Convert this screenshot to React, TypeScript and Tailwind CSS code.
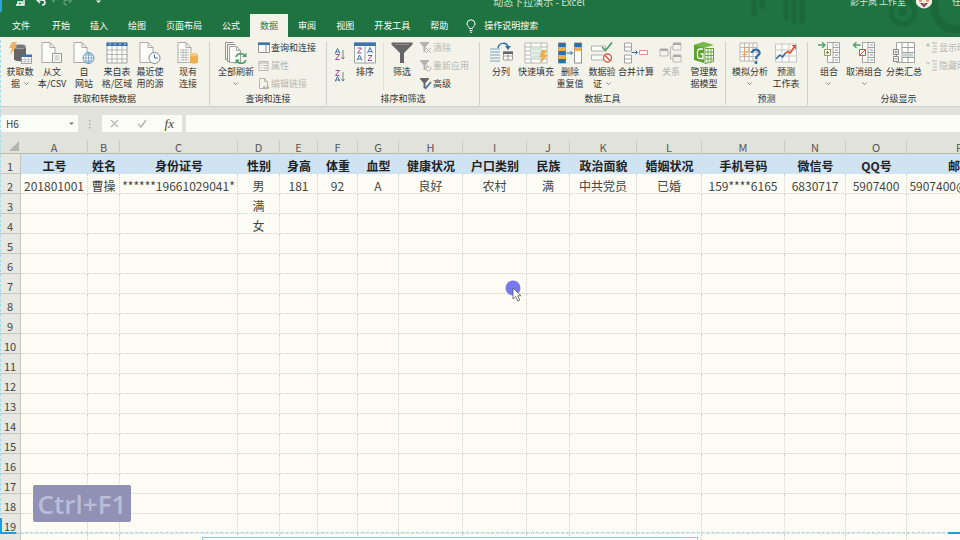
import type { ReactNode } from "react";
import { clsx } from "clsx";

const tabs = ["开始", "插入", "绘图", "页面布局", "公式", "数据", "审阅", "视图", "开发工具", "帮助"];

const columns = [
  { letter: "A", width: 67, title: "工号", value: "201801001" },
  { letter: "B", width: 32, title: "姓名", value: "曹操" },
  { letter: "C", width: 118, title: "身份证号", value: "******19661029041*" },
  { letter: "D", width: 42, title: "性别", value: "男" },
  { letter: "E", width: 38, title: "身高", value: "181" },
  { letter: "F", width: 40, title: "体重", value: "92" },
  { letter: "G", width: 41, title: "血型", value: "A" },
  { letter: "H", width: 64, title: "健康状况", value: "良好" },
  { letter: "I", width: 64, title: "户口类别", value: "农村" },
  { letter: "J", width: 43, title: "民族", value: "满" },
  { letter: "K", width: 67, title: "政治面貌", value: "中共党员" },
  { letter: "L", width: 65, title: "婚姻状况", value: "已婚" },
  { letter: "M", width: 83, title: "手机号码", value: "159****6165" },
  { letter: "N", width: 61, title: "微信号", value: "6830717" },
  { letter: "O", width: 61, title: "QQ号", value: "5907400" },
  { letter: "P", width: 106, title: "邮箱", value: "5907400@qq.com" },
];

const ROW_HEADER_WIDTH = 21;
const tableWidth = columns.reduce((sum, c) => sum + c.width, ROW_HEADER_WIDTH);
const bodyRows = Array.from({ length: 18 }, (_, i) => i + 3);
const extraCells: Record<string, string> = { D3: "满", D4: "女" };

function Icon({ children, small = false }: { children: ReactNode; small?: boolean }) {
  return small ? (
    <svg width="12" height="12" viewBox="0 0 12 12" fill="none" aria-hidden="true" className="shrink-0">
      {children}
    </svg>
  ) : (
    <svg width="24" height="22" viewBox="0 0 24 22" fill="none" aria-hidden="true" className="shrink-0">
      {children}
    </svg>
  );
}

function Page() {
  return <path d="M2 .5h8l5 5v15H2zM10 .5v5h5" fill="#fcfcf8" stroke="#a2a2a2" strokeWidth=".9" />;
}

function GetDataIcon() {
  return (
    <Icon>
      <path d="M6 5v12c0 3 12 3 12 0V5" fill="#666" />
      <ellipse cx="12" cy="4.5" rx="6" ry="2.3" fill="#777" stroke="#ddd" strokeWidth=".5" />
      <path d="M4 0h5L6.500 4H9L2 13l2-7H1z" fill="#f0b263" />
      <path d="M13.500 13.500h10v8h-10z" fill="#fff" stroke="#8b8b8b" strokeWidth=".8" />
      <path d="M13 12.500h11V15H13z" fill="#3e74ae" />
      <path d="M13.500 17.500h10M13.500 19.500h10M17 15v6.500M20.500 15v6.500" stroke="#9b9b9b" strokeWidth=".5" />
    </Icon>
  );
}

function TextFileIcon() {
  return (
    <Icon>
      <Page />
      <path d="M12.500 11.500h9v9h-9z" fill="#fcfcf8" stroke="#999" />
      <path d="M14.500 14h5M14.500 16h5M14.500 18h5" stroke="#a5a5a5" strokeWidth=".8" />
    </Icon>
  );
}

function WebIcon() {
  return (
    <Icon>
      <Page />
      <circle cx="16.500" cy="16" r="5.500" fill="#fafcfd" stroke="#5f94bd" />
      <path
        d="M11 16h11M16.500 10.500v11M12.500 13h8M12.500 19h8M16.500 10.500c-4 3-4 8 0 11M16.500 10.500c4 3 4 8 0 11"
        stroke="#5f94bd"
        strokeWidth=".7"
      />
    </Icon>
  );
}

function TableIcon() {
  return (
    <Icon>
      <path d="M2 1h20v20H2z" fill="#fcfcf8" stroke="#999" strokeWidth=".9" />
      <path d="M1.500.500h21V4h-21z" fill="#3e74ae" />
      <path d="M4 2h2M9 2h2M14 2h2M19 2h2" stroke="#b8d2ea" />
      <path d="M2 8h20M2 12.500h20M2 17h20M7 4v17M12 4v17M17 4v17" stroke="#a5a5a5" strokeWidth=".8" />
    </Icon>
  );
}

function RecentIcon() {
  return (
    <Icon>
      <Page />
      <circle cx="16.500" cy="16" r="5.500" fill="#fcfcf8" stroke="#7d8b98" />
      <path d="M16.500 12.500V16h3.500" stroke="#3e74ae" />
    </Icon>
  );
}

function ConnectionsIcon() {
  return (
    <Icon>
      <Page />
      <path d="M4 8h9M4 10.500h9M4 13h9M4 15.500h9M4 18h9M7 7v12M10 7v12" stroke="#aaa" strokeWidth=".7" />
      <path d="M14 12.500v7.500c0 2 8 2 8 0v-7.500" fill="#eeb04d" />
      <ellipse cx="18" cy="12.500" rx="4" ry="1.700" fill="#f5c983" />
    </Icon>
  );
}

function RefreshIcon() {
  return (
    <Icon>
      <path d="M1.500.500h8M1.500.500v17h2M3.500 2.500h8M3.500 2.500v17h2" stroke="#888" strokeWidth=".9" />
      <path d="M5.500 4.500h7l4 4v12h-11zM12.500 4.500v4h4" fill="#fcfcf8" stroke="#999" strokeWidth=".9" />
      <path d="M12 15a5 5 0 0 1 9-1M22 18a5 5 0 0 1-9 1" stroke="#4d9e6a" strokeWidth="1.600" />
      <path d="M22.500 10.500v4.500H18zM11.500 22v-4.500H16z" fill="#4d9e6a" />
    </Icon>
  );
}

function SortIcon() {
  return (
    <Icon>
      <path d="M1.500 1h21v20h-21zM12 4v17" fill="#fcfcf8" stroke="#999" strokeWidth=".9" />
      <path d="M1 .500h22V4H1z" fill="#3e74ae" />
      <path d="M4.500 6h4l-4 5h4M15 13.500h4l-4 5h4" stroke="#9a4fa0" />
      <path d="M4 18.500 6.500 13 9 18.500M5 17h3M14.500 11 17 5.500l2.500 5.500M15.500 9.500h3" stroke="#3e74ae" />
    </Icon>
  );
}

function SortOrderIcon({ descending = false }: { descending?: boolean }) {
  return (
    <Icon small>
      <path d={descending ? "M1 11.500 3.500 6.500 6 11.500M2 10h3" : "M1 5.500 3.500.5 6 5.500M2 4h3"} stroke="#3e74ae" />
      <path d={descending ? "M1.500.500h4l-4 5h4" : "M1.500 6.500h4l-4 5h4"} stroke="#9a4fa0" />
      <path d="M9 2v9M7.500 9 9 11l1.500-2" stroke="#666" strokeWidth=".8" />
    </Icon>
  );
}

function FilterIcon() {
  return (
    <Icon>
      <path d="M1.500.500h21v2L14 11v10h-4V11L1.500 2.500z" fill="#666" />
      <path d="M5 2.500h14" stroke="#8c8c8c" />
    </Icon>
  );
}

function TextToColumnsIcon() {
  return (
    <Icon>
      <path d="M9 6c1-6 9-6 10-1" stroke="#2f6ea8" strokeWidth="1.500" />
      <path d="m16 4 3 4 3-4z" fill="#2f6ea8" />
      <path d="M1 7h10M1 10h10M1 13h10M1 16h10M1 19h10" stroke="#9fbfd4" strokeWidth="1.300" />
      <path d="M14.500 10h9v8h-9zM14.500 14h9M19 12v6" fill="#fcfcf8" stroke="#888" strokeWidth=".8" />
      <path d="M14 9.500h10V12H14z" fill="#666" />
    </Icon>
  );
}

function FlashFillIcon() {
  return (
    <Icon>
      <path d="M1 1h22v20H1zM1 5h22M1 9h22M1 13h22M1 17h22M7 1v20M17 1v20" fill="#fcfcf8" stroke="#aaa" strokeWidth=".8" />
      <path d="M7 5h10v12H7z" fill="#d5e6d8" />
      <path d="M7 9h10M7 13h10" stroke="#fff" strokeWidth=".7" />
      <path d="M18 8h5l-2.500 5H24l-8 9 2-7h-3z" fill="#eeb04d" />
    </Icon>
  );
}

function RemoveDuplicatesIcon() {
  return (
    <Icon>
      <path d="M.5 1h7v20h-7zM16.500 1h7v20h-7z" fill="#fcfcf8" stroke="#777" strokeWidth=".8" />
      <path d="M.5 1h7v4h-7zM.5 9h7v4h-7zM.5 17h7v4h-7zM16.500 1h7v4h-7z" fill="#2f6ea8" />
      <path d="M.5 5h7v4h-7zM.5 13h7v4h-7zM16.500 5h7v4h-7z" fill="#eeb04d" />
      <path d="M8.500 11h6M12.500 9l2 2-2 2" stroke="#2f6ea8" />
    </Icon>
  );
}

function ValidationIcon() {
  return (
    <Icon>
      <path d="M1.500 4h14v5h-14zM1.500 13h14v5h-14z" fill="#fcfcf8" stroke="#aaa" strokeWidth=".9" />
      <path d="m12 5 3.500 3.500L22 .5" stroke="#4d9e6a" strokeWidth="1.700" />
      <circle cx="17.500" cy="16" r="4" fill="#fcfcf8" stroke="#d9553b" strokeWidth="1.300" />
      <path d="m14.700 13.200 5.600 5.600" stroke="#d9553b" strokeWidth="1.300" />
    </Icon>
  );
}

function ConsolidateIcon() {
  return (
    <Icon>
      <path d="M.5 1h7v8h-7zM.5 13h7v8h-7zM.5 5h7M.5 17h7" fill="#fcfcf8" stroke="#999" strokeWidth=".9" />
      <path d="M7.500 10.500h6M11.500 8.500l2 2-2 2" stroke="#2f6ea8" />
      <path d="M15.500 8.500h8v4h-8z" fill="#fcfcf8" stroke="#d98b8b" />
    </Icon>
  );
}

function RelationsIcon() {
  return (
    <Icon>
      <path d="M1 8h8v6H1zM14 2h8v6h-8zM14 14h8v6h-8zM9 11h2.500M11.500 5v12M11.500 5H14M11.500 17H14" stroke="#bbb" />
      <path d="M1 6.500h8V9H1zM14 .500h8V3h-8zM14 12.500h8V15h-8z" fill="#aaa" />
    </Icon>
  );
}

function DataModelIcon() {
  return (
    <Icon>
      <path d="M2 3 12 0v21L2 18z" fill="#5ca52c" />
      <path d="m12 0 10 3-10 3L2 3z" fill="#78b94b" />
      <path d="M13 6.500h8.500v13L13 21.500z" fill="#fcfcf8" stroke="#5ca52c" />
      <path d="M13 10h8.500M13 13.500h8.500M13 17h8.500M16 6.500v14M19 6.500V20" stroke="#5ca52c" strokeWidth=".9" />
      <path d="M11 7H8c-2 0-2.500 1-2.500 3v4c0 2 1 2.500 2.500 2.500h3V12H8.500" stroke="#fff" strokeWidth="1.300" />
    </Icon>
  );
}

function WhatIfIcon() {
  return (
    <Icon>
      <path d="M2 1h17v18H2zM2 5.500h17M2 10h17M2 14.500h17M6.500 1v18M11 1v18M15 1v18" fill="#fcfcf8" stroke="#aaa" strokeWidth=".8" />
      <path d="M6.500 5.500H11V10H6.500zM4 12.500h5M6.500 10v6" stroke="#e5a06c" />
      <path d="M14 11c0-5 8.500-4 7.500.5-.5 2-3.500 2.300-3.500 5.500" stroke="#2f6ea8" strokeWidth="2.300" />
      <circle cx="18" cy="20.500" r="1.500" fill="#2f6ea8" />
    </Icon>
  );
}

function ForecastIcon() {
  return (
    <Icon>
      <path d="M1.500 2h21v18h-21zM1.500 8h21M1.500 14h21M8 2v18M15 2v18" fill="#fcfcf8" stroke="#bbb" strokeWidth=".8" />
      <path d="m2 17 4-4 2.500 2 3-4" stroke="#2f6ea8" strokeWidth="1.600" />
      <path d="m11 11.500 3-2 2 1.500 5-7" stroke="#d9553b" strokeWidth="1.600" />
      <path d="M17.500 3h4.500v4.500z" fill="#d9553b" />
    </Icon>
  );
}

function GroupIcon({ undo = false }: { undo?: boolean }) {
  return (
    <Icon>
      <path d="M10.500.500h12v20h-12zM16 .500v20M16 5.500h6.500M16 10.500h6.500M16 15.500h6.500" fill="#fcfcf8" stroke="#999" strokeWidth=".9" />
      <path d="M18 3h3M18 8h3M18 13h3M18 18h3" stroke="#7a9dbb" />
      <path d={undo ? "M1.500 3h7M4.500 0l-3 3 3 3" : "M1 3h7M5 0l3 3-3 3"} stroke="#4d9e6a" strokeWidth="1.300" />
      <path d="M7.500 7.500h6v6h-6z" fill="#fcfcf8" stroke={undo ? "#d9553b" : "#9a9a5a"} />
      <path d={undo ? "m7.500 13.500 6-6" : "M9 10.500h3M10.500 9v3"} stroke={undo ? "#d9553b" : "#777"} />
    </Icon>
  );
}

function SubtotalIcon() {
  return (
    <Icon>
      <path d="M4.500.500h18v20h-18zM10 .500v20M16 .500v20M10 5.500h12.500M10 10.500h12.500M10 15.500h12.500" fill="#fcfcf8" stroke="#999" strokeWidth=".9" />
      <path d="M11 11.500h4v3h-4zM17 11.500h4v3h-4z" fill="#b5d8d2" />
      <path d="M1.500 7.500h5v5h-5zM1.500 14.500h5v5h-5z" fill="#fcfcf8" stroke="#888" />
      <path d="M2.500 10h3M4 8.500v3M2.500 17h3" stroke="#777" strokeWidth=".8" />
    </Icon>
  );
}

function SmallFilterIcon({ muted = false, children }: { muted?: boolean; children: ReactNode }) {
  return (
    <Icon small>
      <path d="M0 0h9v1L5.500 5v5h-2V5L0 1z" fill={muted ? "#b4b4ae" : "#666"} />
      {children}
    </Icon>
  );
}

function Chevron() {
  return (
    <svg width="5" height="4" viewBox="0 0 5 4" fill="none" aria-hidden="true" className="inline-block">
      <path d="m.5.500 2 2 2-2" stroke="#666" strokeWidth=".8" />
    </svg>
  );
}

type RibbonButtonProps = {
  icon: ReactNode;
  lines: string[];
  width: string;
  menu?: boolean;
  disabled?: boolean;
};

function RibbonButton({ icon, lines, width, menu = false, disabled = false }: RibbonButtonProps) {
  return (
    <button
      type="button"
      disabled={disabled}
      className={clsx("flex shrink-0 flex-col items-center", width, disabled && "text-[#b0b0aa]")}
    >
      {icon}
      <span className="mt-0.5 flex flex-col items-center leading-3 whitespace-nowrap">
        {lines.map((line, i) => (
          <span key={line} className="flex items-center gap-1">
            {line}
            {menu && i === 1 && <Chevron />}
          </span>
        ))}
        {menu && lines.length === 1 && (
          <span className="flex h-3 items-center">
            <Chevron />
          </span>
        )}
      </span>
    </button>
  );
}

function SmallButton({ icon, label, disabled = false }: { icon: ReactNode; label: string; disabled?: boolean }) {
  return (
    <button
      type="button"
      disabled={disabled}
      className={clsx("flex items-center gap-px leading-3 whitespace-nowrap", disabled && "text-[#b8b8b0]")}
    >
      {icon}
      {label}
    </button>
  );
}

function RibbonGroup({ label, width, children }: { label: string; width: string; children: ReactNode }) {
  return (
    <section
      aria-label={label}
      className={clsx("flex shrink-0 flex-col justify-between border-r border-[#d0d0ca] pl-1", width)}
    >
      <div className="flex items-start">{children}</div>
      <h2 className="pr-1 text-center leading-3">{label}</h2>
    </section>
  );
}

function TitleBar() {
  return (
    <div className="relative flex h-3.5 items-start justify-between pl-4 text-[9px] leading-1 text-[#cfe3d3]">
      <svg width="86" height="8" viewBox="0 0 86 8" fill="none" aria-hidden="true">
        <path d="M-1-5h9V5h-9z" stroke="#fff" strokeWidth="1.400" />
        <path d="M0-1h7M2 5V2h4v3" stroke="#fff" strokeWidth="1.500" />
        <path d="M21 0h5c4 0 4 5 0 5M24-3l-3 3 3 3" stroke="#fff" strokeWidth="1.400" />
        <path d="M36 .500h3l-1.500 2z" fill="#8fb99a" />
        <path d="M56 0h-5c-4 0-4 5 0 5M53-3l3 3-3 3" stroke="#5a9a6c" strokeWidth="1.400" />
        <path d="M80 .500h5L82.500 3z" fill="#fff" />
      </svg>
      <p className="absolute inset-x-0 top-0 pl-[118px] text-center text-[10px]">动态下拉演示 - Excel</p>
      <div className="flex items-start gap-2.5">
        <span>影子岚 工作室</span>
        <svg width="16" height="9" viewBox="0 0 16 9" aria-hidden="true">
          <circle cx="8" cy="0" r="8.500" fill="#f5efe6" />
          <path d="M3 0h3v2H3zM10 0h3v2h-3z" fill="#d9a06a" />
          <path d="M4 3h8L8 7.500z" fill="#7c3f6f" />
          <path d="M6.500 3h3L8 5z" fill="#e8933c" />
        </svg>
        <span className="w-[18px] pl-2.5 whitespace-nowrap">任</span>
      </div>
    </div>
  );
}

function Header() {
  return (
    <header className="relative overflow-hidden bg-[#1f7340] text-white">
      <svg width="220" height="37" viewBox="0 0 220 37" fill="none" aria-hidden="true" className="absolute top-0 right-0">
        <path d="M14 0v16M22 0v9M46 0v20M54 0v24M62 0v23" stroke="#1b6838" strokeWidth="5" />
        <circle cx="163" cy="12" r="12" stroke="#1b6838" strokeWidth="5" />
        <circle cx="163" cy="12" r="4" fill="#1b6838" />
        <circle cx="216" cy="7" r="22" stroke="#1b6838" strokeWidth="8" />
      </svg>
      <TitleBar />
      <nav aria-label="功能区选项卡" className="relative flex h-[23px] items-stretch pl-0.5 text-[9px] leading-3">
        <button type="button" className="mr-0.5 px-2.5">
          文件
        </button>
        {tabs.map((tab) => (
          <button
            key={tab}
            type="button"
            className={clsx("px-2.5 whitespace-nowrap", tab === "数据" && "bg-[#f3f3ea] text-[#2d7a4b]")}
          >
            {tab}
          </button>
        ))}
        <button type="button" className="flex items-center gap-2 pl-2 whitespace-nowrap">
          <svg width="10" height="14" viewBox="0 0 10 14" fill="none" aria-hidden="true">
            <path d="M3.500 9.500C3.500 8 1 7 1 4.800a4 4 0 0 1 8 0C9 7 6.500 8 6.500 9.500zM3.500 11.500h3M4 13.200h2" stroke="#fff" />
          </svg>
          操作说明搜索
        </button>
      </nav>
    </header>
  );
}

function Ribbon() {
  return (
    <div className="flex h-[70px] overflow-hidden border-b border-[#cfcfc9] bg-[#f3f3ea] pt-[5px] pb-px text-[9px] text-[#333]">
      <RibbonGroup label="获取和转换数据" width="w-[210px]">
        <RibbonButton icon={<GetDataIcon />} lines={["获取数", "据"]} width="w-8" menu />
        <RibbonButton icon={<TextFileIcon />} lines={["从文", "本/CSV"]} width="w-8" />
        <RibbonButton icon={<WebIcon />} lines={["自", "网站"]} width="w-8" />
        <RibbonButton icon={<TableIcon />} lines={["来自表", "格/区域"]} width="w-[34px]" />
        <RibbonButton icon={<RecentIcon />} lines={["最近使", "用的源"]} width="w-8" />
        <RibbonButton icon={<ConnectionsIcon />} lines={["现有", "连接"]} width="w-11" />
      </RibbonGroup>

      <RibbonGroup label="查询和连接" width="w-[117px]">
        <RibbonButton icon={<RefreshIcon />} lines={["全部刷新"]} width="w-11" menu />
        <div className="flex flex-col gap-1.5">
          <SmallButton
            label="查询和连接"
            icon={
              <Icon small>
                <path d="M.5 1h11v9.500H.5zM8 3v7.500" fill="#fcfcf8" stroke="#888" strokeWidth=".9" />
                <path d="M0 .500h12V3H0z" fill="#3e74ae" />
              </Icon>
            }
          />
          <SmallButton
            disabled
            label="属性"
            icon={
              <Icon small>
                <path d="M1 1.500h9v9h-9zM1 3h9M3 5.500h1M3 8h1M5.500 5.500H9M5.500 8H9" stroke="#b8b8b0" />
              </Icon>
            }
          />
          <SmallButton
            disabled
            label="编辑链接"
            icon={
              <Icon small>
                <path d="M1.500.500h5l3 3v7h-8zM6.500.500v3h3" stroke="#b8b8b0" />
                <path d="M5 9.500h2.500M8.500 9.500H11" stroke="#a8a8a0" strokeWidth="2" />
              </Icon>
            }
          />
        </div>
      </RibbonGroup>

      <RibbonGroup label="排序和筛选" width="w-[153px]">
        <div className="flex w-[18px] flex-col items-center gap-2.5 pt-1.5">
          <button type="button" aria-label="升序">
            <SortOrderIcon />
          </button>
          <button type="button" aria-label="降序">
            <SortOrderIcon descending />
          </button>
        </div>
        <RibbonButton icon={<SortIcon />} lines={["排序"]} width="w-8" />
        <div className="mx-0.5 h-12 border-r border-[#e0e0d8]" />
        <RibbonButton icon={<FilterIcon />} lines={["筛选"]} width="w-8" />
        <div className="flex flex-col gap-1.5 pl-0.5">
          <SmallButton
            disabled
            label="清除"
            icon={
              <SmallFilterIcon muted>
                <path d="m6 6 5 5M11 6l-5 5" stroke="#b4b4ae" />
              </SmallFilterIcon>
            }
          />
          <SmallButton
            disabled
            label="重新应用"
            icon={
              <SmallFilterIcon muted>
                <path d="M7 6.500a2.500 2.500 0 1 0 3 0M7 4.500v2.500h2" stroke="#b4b4ae" />
              </SmallFilterIcon>
            }
          />
          <SmallButton
            label="高级"
            icon={
              <SmallFilterIcon>
                <path d="m5 11 6-7" stroke="#3e74ae" strokeWidth="1.800" />
              </SmallFilterIcon>
            }
          />
        </div>
      </RibbonGroup>

      <RibbonGroup label="数据工具" width="w-[246px]">
        <RibbonButton icon={<TextToColumnsIcon />} lines={["分列"]} width="w-[34px]" />
        <RibbonButton icon={<FlashFillIcon />} lines={["快速填充"]} width="w-9" />
        <RibbonButton icon={<RemoveDuplicatesIcon />} lines={["删除", "重复值"]} width="w-8" />
        <RibbonButton icon={<ValidationIcon />} lines={["数据验", "证"]} width="w-8" menu />
        <RibbonButton icon={<ConsolidateIcon />} lines={["合并计算"]} width="w-9" />
        <RibbonButton icon={<RelationsIcon />} lines={["关系"]} width="w-[34px]" disabled />
        <RibbonButton icon={<DataModelIcon />} lines={["管理数", "据模型"]} width="w-8" />
      </RibbonGroup>

      <RibbonGroup label="预测" width="w-[82px]">
        <RibbonButton icon={<WhatIfIcon />} lines={["模拟分析"]} width="w-10" menu />
        <RibbonButton icon={<ForecastIcon />} lines={["预测", "工作表"]} width="w-8" />
      </RibbonGroup>

      <RibbonGroup label="分级显示" width="w-[182px]">
        <RibbonButton icon={<GroupIcon />} lines={["组合"]} width="w-[34px]" menu />
        <RibbonButton icon={<GroupIcon undo />} lines={["取消组合"]} width="w-9" menu />
        <RibbonButton icon={<SubtotalIcon />} lines={["分类汇总"]} width="w-11" />
        <div className="flex flex-col gap-1.5">
          <SmallButton
            disabled
            label="显示明细数据"
            icon={
              <Icon small>
                <path d="M0 3h4M2 1v4M6 1h5M7 4h4M7 7h4M6 10h5" stroke="#b8b8b0" />
              </Icon>
            }
          />
          <SmallButton
            disabled
            label="隐藏明细数据"
            icon={
              <Icon small>
                <path d="M0 3h4M6 1h5M7 4h4M7 7h4M6 10h5" stroke="#b8b8b0" />
              </Icon>
            }
          />
        </div>
      </RibbonGroup>
    </div>
  );
}

function FormulaBar() {
  return (
    <div className="flex h-[33px] items-center bg-[#e2e2dd] text-[#444]">
      <div className="flex h-[17px] w-[78px] items-center bg-[#fcfcf6] pr-1">
        <input
          aria-label="名称框"
          defaultValue="H6"
          className="w-full min-w-0 bg-transparent pl-1.5 text-[10px] leading-4 outline-none"
        />
        <svg width="5" height="4" viewBox="0 0 5 4" aria-hidden="true" className="shrink-0">
          <path d="M0 .500h5L2.500 3z" fill="#777" />
        </svg>
      </div>
      <div className="flex w-6 justify-center">
        <svg width="2" height="10" viewBox="0 0 2 10" aria-hidden="true">
          <path d="M0 1h1.500v1.500H0zM0 4.500h1.500V6H0zM0 8h1.500v1.500H0z" fill="#aaa" />
        </svg>
      </div>
      <div className="flex h-[17px] w-20 items-center justify-between bg-[#fcfcf6] px-2">
        <button type="button" aria-label="取消">
          <svg width="9" height="9" viewBox="0 0 9 9" aria-hidden="true">
            <path d="m1 1 7 7M8 1 1 8" stroke="#b5b5b5" strokeWidth="1.200" />
          </svg>
        </button>
        <button type="button" aria-label="输入">
          <svg width="10" height="9" viewBox="0 0 10 9" fill="none" aria-hidden="true">
            <path d="m1 5 3 3 5-7" stroke="#b5b5b5" strokeWidth="1.500" />
          </svg>
        </button>
        <button type="button" className="font-['Liberation_Serif',serif] text-[13px] leading-4 italic">
          fx
        </button>
      </div>
      <input aria-label="编辑栏" className="ml-1 h-[17px] min-w-0 flex-1 bg-[#fcfcf6] px-1 text-[10px] outline-none" />
    </div>
  );
}

function Sheet() {
  const rowHeader =
    "border-r border-b border-[#c6c6c0] bg-[#e8e8e2] p-0 pt-1 text-[11px] leading-[14px] font-normal text-[#444]";
  const cell =
    "overflow-hidden border-r border-b border-dotted border-[#d2d2c8] p-0 pt-1 text-center leading-[15px] whitespace-nowrap";

  return (
    <div className="min-h-0 flex-1 overflow-hidden bg-[#fdfdf5]">
      <table className="table-fixed border-separate border-spacing-0 text-[12px] text-[#444]" style={{ width: tableWidth }}>
        <colgroup>
          <col style={{ width: ROW_HEADER_WIDTH }} />
          {columns.map((c) => (
            <col key={c.letter} style={{ width: c.width }} />
          ))}
        </colgroup>
        <thead>
          <tr className="h-3.5 bg-[#e2e2dd]">
            <td className="border-b border-[#b4bfa6] p-0">
              <svg width="20" height="11" viewBox="0 0 20 11" aria-hidden="true" className="block">
                <path d="M19 0v10H9z" fill="#b4b4b0" />
              </svg>
            </td>
            {columns.map((c) => (
              <th
                key={c.letter}
                scope="col"
                className="border-r border-b border-r-[#cbcbc5] border-b-[#b4bfa6] p-0 pt-px text-[11px] leading-3 font-normal text-[#555]"
              >
                {c.letter}
              </th>
            ))}
          </tr>
        </thead>
        <tbody>
          <tr className="h-5">
            <th scope="row" className={rowHeader}>
              1
            </th>
            {columns.map((c) => (
              <td
                key={c.letter}
                className="overflow-hidden bg-[#d0e3f2] p-0 pt-1 text-center leading-4 font-bold whitespace-nowrap text-[#222]"
              >
                {c.title}
              </td>
            ))}
          </tr>
          <tr className="h-5">
            <th scope="row" className={rowHeader}>
              2
            </th>
            {columns.map((c) => (
              <td key={c.letter} className={cell}>
                {c.value}
              </td>
            ))}
          </tr>
          {bodyRows.map((row) => (
            <tr key={row} className="h-5">
              <th scope="row" className={rowHeader}>
                {row}
              </th>
              {columns.map((c) => (
                <td key={c.letter} className={cell}>
                  {extraCells[`${c.letter}${row}`]}
                </td>
              ))}
            </tr>
          ))}
        </tbody>
      </table>
    </div>
  );
}

// Frame the screen recorder draws around the captured area
function RecorderFrame() {
  return (
    <div className="pointer-events-none absolute inset-0" aria-hidden="true">
      <div className="absolute top-10 bottom-6 left-0 border-l border-dashed border-[#a5dcea]" />
      <div className="absolute top-0 left-0 h-3 w-0.5 bg-[#2aa5dc]" />
      <div className="absolute inset-x-0 bottom-[7px] border-b border-dashed border-[#a8d4ec]" />
      <div className="absolute bottom-1.5 left-0 h-4 w-4 border-b-2 border-l-2 border-[#1a9fd9]" />
      <div className="absolute right-0 bottom-1.5 h-0.5 w-3 bg-[#1a9fd9]" />
      <div className="absolute right-[262px] bottom-0 left-[202px] h-[3px] border border-b-0 border-[#8cc8e6] bg-white" />
    </div>
  );
}

export default function App() {
  return (
    <div className="relative flex h-screen flex-col overflow-hidden bg-[#fdfdf5] font-['Noto_Sans_CJK_SC',sans-serif]">
      <Header />
      <Ribbon />
      <FormulaBar />
      <Sheet />
      <RecorderFrame />

      <div className="absolute bottom-[18px] left-[33px] flex h-[37px] w-[98px] items-center justify-center rounded-xs bg-[#9191b5] font-['Open_Sans',sans-serif] text-[26px] leading-9 font-semibold text-[#b9bdd6]">
        Ctrl+F1
      </div>

      <svg width="20" height="24" viewBox="0 0 20 24" aria-hidden="true" className="absolute top-[280px] left-[505px]">
        <circle cx="8" cy="8" r="7.500" fill="#7777ee" />
        <path d="M8 8v11l2.700-2.500 2 4.500 2-.900-2-4.300H16z" fill="#fff" stroke="#555" strokeWidth=".8" />
      </svg>
    </div>
  );
}
